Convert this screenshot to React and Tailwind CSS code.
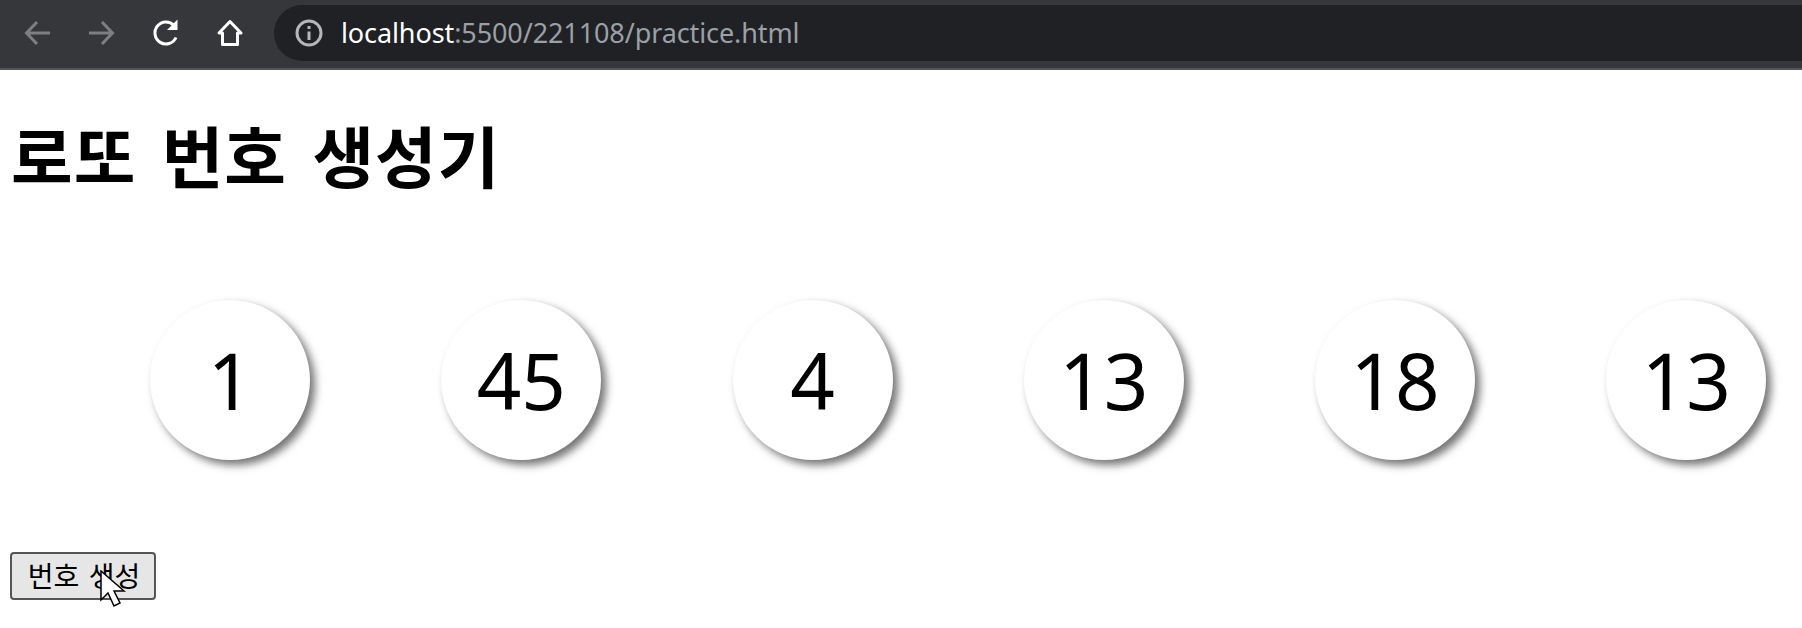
const numbers = [1, 45, 4, 13, 18, 13]

const Back = ({ flip }) => (
    <svg width="30" height="30" viewBox="0 0 30 30" fill="none" stroke="#7d7f82" strokeWidth="3" className={flip ? 'rotate-180' : ''}>
        <path d="M27 15H4M14 4L3.5 15L14 26" />
    </svg>
)

const App = () => {
    return (
        <div className="bg-white h-[628px] overflow-hidden font-['Noto_Sans','Noto_Sans_CJK_KR',sans-serif] text-black">
            <div className="h-[70px] bg-[#36373b] border-b-2 border-[#55565a] flex items-center pl-[23px] pb-[2px]">
                <Back />
                <div className="ml-[33px]"><Back flip /></div>
                <svg width="32" height="32" viewBox="0 0 32 32" fill="none" stroke="white" strokeWidth="3" className="ml-[34px]">
                    <path d="M26 20.5A11 11 0 1 1 24 8.5" />
                    <path d="M27.5 2.5V13H17Z" fill="white" stroke="none" />
                </svg>
                <svg width="30" height="30" viewBox="0 0 30 30" fill="none" stroke="white" strokeWidth="3" className="ml-[33px]">
                    <path d="M15 3.5L4 15H7.5V26.5H22.5V15H26Z" strokeLinejoin="round" />
                </svg>
                <div className="ml-[29px] flex-1 h-[56px] bg-[#202124] rounded-l-[28px] flex items-center pl-[20px]">
                    <svg width="30" height="30" viewBox="0 0 30 30" fill="none" stroke="#b4b6b8" strokeWidth="3">
                        <circle cx="15" cy="15" r="12" />
                        <path d="M15 13.5V22M15 8V11" />
                    </svg>
                    <span className="ml-[17px] text-[27px] leading-none tracking-[-0.1px] text-[#9aa0a6] mb-[2px]"><span className="text-white">localhost</span>:5500/221108/practice.html</span>
                </div>
            </div>

            <h1 className="mt-[52px] ml-[11px] text-[67px] leading-[70px] font-bold tracking-[1px] [word-spacing:7px]">로또 번호 생성기</h1>

            <div className="mt-[108px] pl-[150px] flex gap-[131.25px]">
                {numbers.map((n, i) => (
                    <div key={i} className="w-[160px] h-[160px] rounded-full bg-white shadow-[5px_5px_8px_rgba(0,0,0,0.55)] flex items-center justify-center text-[78px] leading-none font-normal">
                        {n}
                    </div>
                ))}
            </div>

            <div className="relative mt-[92px] ml-[10px] w-fit">
                <button className="w-[146px] h-[48px] pl-[2px] bg-[#e6e6e6] border-2 border-[#555555] rounded-[4px] text-[28px] leading-none [word-spacing:2px]">번호 생성</button>
                <svg width="26" height="40" viewBox="0 0 26 40" className="absolute left-[90px] top-[18px]" fill="white" stroke="black" strokeWidth="1.5">
                    <path d="M1 1V30L8 23L14 36L20 33L14 21H24Z" />
                </svg>
            </div>
        </div>
    )
}

export default App
